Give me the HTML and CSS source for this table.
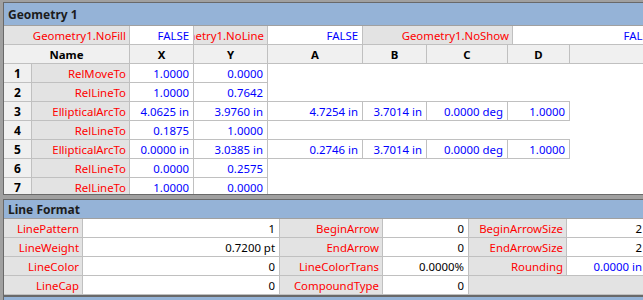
FILE: index.html
```html
<!DOCTYPE html>
<html lang="en">
<head>
  <meta charset="UTF-8" />
  <title>ShapeSheet</title>
  <link rel="stylesheet" href="styles.css">
</head>
<body>
  <div class="pane geometry">
    <div class="title">Geometry 1</div>

    <div class="row">
      <div class="cell label w-126">Geometry1.NoFill</div>
      <div class="cell val w-64">FALSE</div>
      <div class="cell label w-74"><span>Geometry1.NoLine</span></div>
      <div class="cell val w-95">FALSE</div>
      <div class="cell label w-150">Geometry1.NoShow</div>
      <div class="cell val w-147">FALSE</div>
    </div>

    <div class="row head">
      <div class="cell w-126">Name</div>
      <div class="cell w-64">X</div>
      <div class="cell w-74">Y</div>
      <div class="cell w-95">A</div>
      <div class="cell w-64">B</div>
      <div class="cell w-81">C</div>
      <div class="cell w-62">D</div>
      <div class="cell fill"></div>
    </div>

    <div class="row">
      <div class="cell idx">1</div>
      <div class="cell label w-98">RelMoveTo</div>
      <div class="cell val w-64">1.0000</div>
      <div class="cell val w-74">0.0000</div>
    </div>
    <div class="row">
      <div class="cell idx">2</div>
      <div class="cell label w-98">RelLineTo</div>
      <div class="cell val w-64">1.0000</div>
      <div class="cell val w-74">0.7642</div>
    </div>
    <div class="row">
      <div class="cell idx">3</div>
      <div class="cell label w-98">EllipticalArcTo</div>
      <div class="cell val w-64">4.0625 in</div>
      <div class="cell val w-74">3.9760 in</div>
      <div class="cell val extra w-95">4.7254 in</div>
      <div class="cell val extra w-64">3.7014 in</div>
      <div class="cell val extra w-81">0.0000 deg</div>
      <div class="cell val extra w-62">1.0000</div>
    </div>
    <div class="row">
      <div class="cell idx">4</div>
      <div class="cell label w-98">RelLineTo</div>
      <div class="cell val w-64">0.1875</div>
      <div class="cell val w-74">1.0000</div>
    </div>
    <div class="row">
      <div class="cell idx">5</div>
      <div class="cell label w-98">EllipticalArcTo</div>
      <div class="cell val w-64">0.0000 in</div>
      <div class="cell val w-74">3.0385 in</div>
      <div class="cell val extra w-95">0.2746 in</div>
      <div class="cell val extra w-64">3.7014 in</div>
      <div class="cell val extra w-81">0.0000 deg</div>
      <div class="cell val extra w-62">1.0000</div>
    </div>
    <div class="row">
      <div class="cell idx">6</div>
      <div class="cell label w-98">RelLineTo</div>
      <div class="cell val w-64">0.0000</div>
      <div class="cell val w-74">0.2575</div>
    </div>
    <div class="row">
      <div class="cell idx">7</div>
      <div class="cell label w-98">RelLineTo</div>
      <div class="cell val w-64">1.0000</div>
      <div class="cell val w-74">0.0000</div>
    </div>
  </div>

  <div class="pane lineformat">
    <div class="title small">Line Format</div>

    <div class="row">
      <div class="cell label w-79">LinePattern</div>
      <div class="cell val plain w-197">1</div>
      <div class="cell label w-103">BeginArrow</div>
      <div class="cell val plain w-86">0</div>
      <div class="cell label w-98">BeginArrowSize</div>
      <div class="cell val plain w-80">2</div>
    </div>
    <div class="row">
      <div class="cell label w-79">LineWeight</div>
      <div class="cell val plain w-197">0.7200 pt</div>
      <div class="cell label w-103">EndArrow</div>
      <div class="cell val plain w-86">0</div>
      <div class="cell label w-98">EndArrowSize</div>
      <div class="cell val plain w-80">2</div>
    </div>
    <div class="row">
      <div class="cell label w-79">LineColor</div>
      <div class="cell val plain w-197">0</div>
      <div class="cell label w-103">LineColorTrans</div>
      <div class="cell val plain w-86">0.0000%</div>
      <div class="cell label w-98">Rounding</div>
      <div class="cell val w-80">0.0000 in</div>
    </div>
    <div class="row">
      <div class="cell label w-79">LineCap</div>
      <div class="cell val plain w-197">0</div>
      <div class="cell label w-103">CompoundType</div>
      <div class="cell val plain w-86">0</div>
      <div class="cell label blank w-178"></div>
    </div>
  </div>

  <div class="pane next">
    <div class="title small"></div>
  </div>
</body>
</html>
```

FILE: styles.css
```css
* {
  margin: 0;
  padding: 0;
  box-sizing: border-box;
}
body {
  font-family: 'Noto Sans', 'Open Sans', sans-serif;
  font-size: 11.4px;
  background: #a0a0a0;
  padding: 2px 0 0 3px;
  width: 643px;
  height: 300px;
  overflow: hidden;
  color: #000;
}
.pane {
  background: #fff;
  border-top: 1px solid #696969;
  border-left: 1px solid #696969;
  width: 700px;
}
.geometry {
  height: 193px;
  border-bottom: 1px solid #696969;
  overflow: hidden;
  margin-bottom: 4px;
}
.lineformat {
  border-bottom: 1px solid #696969;
}
.title {
  height: 23px;
  background: #95b3d7;
  border-bottom: 1px solid #a0a0a0;
  font-weight: 700;
  font-size: 12px;
  padding-left: 4px;
  display: flex;
  align-items: center;
  color: #1c1c1c;
}
.title.small {
  height: 19px;
}
.row {
  display: flex;
  height: 19px;
}
.cell {
  height: 19px;
  flex-shrink: 0;
  border-right: 1px solid #c0c0c0;
  border-bottom: 1px solid #c0c0c0;
  padding: 0 3px;
  display: flex;
  align-items: center;
  justify-content: flex-end;
  white-space: nowrap;
  overflow: hidden;
}
.cell span {
  flex-shrink: 0;
}
.label {
  background: #e3e3e3;
  color: #ff0000;
}
.label.blank {
  border-right: none;
}
.val {
  color: #0000ff;
  padding-right: 4px;
}
.val.plain {
  color: #000;
}
.extra {
  box-shadow: 0 -1px 0 #c0c0c0;
}
.idx {
  width: 28px;
  background: #f0f0f0;
  font-weight: 700;
  font-size: 12px;
  justify-content: center;
  padding: 0;
}
.head .cell {
  background: #f0f0f0;
  font-weight: 700;
  justify-content: center;
}
.head .fill {
  flex: 1;
}
.next .title {
  border-bottom: none;
}
.w-62 { width: 62px; }
.w-64 { width: 64px; }
.w-74 { width: 74px; }
.w-79 { width: 79px; }
.w-80 { width: 80px; }
.w-81 { width: 81px; }
.w-86 { width: 86px; }
.w-95 { width: 95px; }
.w-98 { width: 98px; }
.w-103 { width: 103px; }
.w-126 { width: 126px; }
.w-147 { width: 147px; }
.w-150 { width: 150px; }
.w-178 { width: 178px; }
.w-197 { width: 197px; }
```
